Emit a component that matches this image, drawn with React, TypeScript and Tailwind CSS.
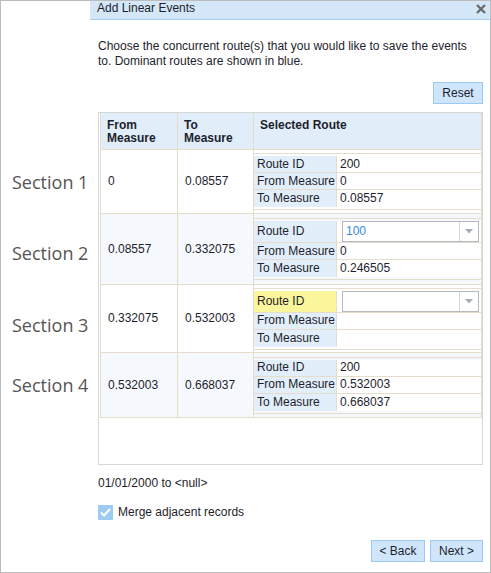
import React from "react";

type SubRow = {
  label: string;
  value: string;
  select?: boolean;
  blue?: boolean;
  yellow?: boolean;
};

type Section = {
  from: string;
  to: string;
  height: string;
  shaded: boolean;
  route: SubRow[];
};

const sections: Section[] = [
  {
    from: "0",
    to: "0.08557",
    height: "h-[64px]",
    shaded: false,
    route: [
      { label: "Route ID", value: "200" },
      { label: "From Measure", value: "0" },
      { label: "To Measure", value: "0.08557" },
    ],
  },
  {
    from: "0.08557",
    to: "0.332075",
    height: "h-[71px]",
    shaded: true,
    route: [
      { label: "Route ID", value: "100", select: true, blue: true },
      { label: "From Measure", value: "0" },
      { label: "To Measure", value: "0.246505" },
    ],
  },
  {
    from: "0.332075",
    to: "0.532003",
    height: "h-[68px]",
    shaded: false,
    route: [
      { label: "Route ID", value: "", select: true, yellow: true },
      { label: "From Measure", value: "" },
      { label: "To Measure", value: "" },
    ],
  },
  {
    from: "0.532003",
    to: "0.668037",
    height: "h-[65px]",
    shaded: true,
    route: [
      { label: "Route ID", value: "200" },
      { label: "From Measure", value: "0.532003" },
      { label: "To Measure", value: "0.668037" },
    ],
  },
];

// dropdown used for the route id when more than one route is concurrent
function RouteSelect({ value, blue }: { value: string; blue?: boolean }) {
  return (
    <div className="mx-[2px] flex h-[21px] flex-1 border border-[#b4b9c0] bg-white">
      <span
        className={`flex-1 pl-[3px] leading-[19px] ${
          blue ? "text-[#3a8ad8]" : ""
        }`}
      >
        {value}
      </span>
      <span className="flex w-[19px] items-center justify-center border-l border-[#d3d6da]">
        <svg width="8" height="5" viewBox="0 0 8 5">
          <path d="M0 0h8L4 4.5z" fill="#a3acb7" />
        </svg>
      </span>
    </div>
  );
}

function RouteDetails({ rows }: { rows: SubRow[] }) {
  return (
    <div className="border-y border-[#e6dccb] py-[2px]">
      {rows.map((r, i) => (
        <div
          key={r.label}
          className={`flex ${r.select ? "h-[22px]" : "h-[17px]"} ${
            i < rows.length - 1 ? "border-b border-[#e6dccb]" : ""
          }`}
        >
          <div
            className={`flex w-[83px] items-center border-r border-[#e6dccb] pl-[3px] ${
              r.yellow ? "bg-[#fbf69c]" : "bg-[#e2eefa]"
            }`}
          >
            {r.label}
          </div>
          <div className="flex flex-1 items-center bg-white pl-[3px]">
            {r.select ? (
              <RouteSelect value={r.value} blue={r.blue} />
            ) : (
              r.value
            )}
          </div>
        </div>
      ))}
    </div>
  );
}

export default function App() {
  return (
    <div
      className="flex h-[573px] w-[491px] border border-[#bcbcbc] bg-white text-[12px] leading-[15px] text-[#1e1e2c]"
      style={{ fontFamily: '"Liberation Sans", Arial, sans-serif' }}
    >
      {/* annotations on the left */}
      <div
        className="flex w-[89px] flex-col pt-[169px] pl-[11px] text-[18px] leading-[24px] text-[#555]"
        style={{ fontFamily: '"Open Sans", sans-serif' }}
      >
        <div>Section 1</div>
        <div className="mt-[47px]">Section 2</div>
        <div className="mt-[48px]">Section 3</div>
        <div className="mt-[36px]">Section 4</div>
      </div>

      <div className="flex w-[400px] flex-col">
        <div className="flex h-[19px] items-start justify-between border-b border-[#a9cdef] bg-[#d3e7f9] pl-[7px] pr-[4px]">
          <span className="leading-[14px]">Add Linear Events</span>
          <svg width="10" height="10" viewBox="0 0 10 10" className="mt-[3px]">
            <path
              d="M1 1L9 9M9 1L1 9"
              stroke="#6b6b6b"
              strokeWidth="2.4"
            />
          </svg>
        </div>

        <div className="flex flex-1 flex-col pl-[8px] pr-[7px]">
          <p className="mt-[19px]">
            Choose the concurrent route(s) that you would like to save the
            events to. Dominant routes are shown in blue.
          </p>

          <div className="mt-[13px] flex justify-end">
            <button className="h-[22px] w-[50px] border border-[#9ccaf1] bg-[#cfe5fb]">
              Reset
            </button>
          </div>

          <div className="mt-[8px] h-[353px] border border-[#d6d6d6]">
            <div className="ml-[1px] border-x border-[#e6dccb]">
              <div className="grid h-[37px] grid-cols-[77px_76px_1fr] border-b border-[#e6dccb] bg-[#e1eefa] font-bold leading-[13px]">
                <div className="border-r border-[#e6dccb] pl-[6px] pt-[6px]">
                  From
                  <br />
                  Measure
                </div>
                <div className="border-r border-[#e6dccb] pl-[6px] pt-[6px]">
                  To
                  <br />
                  Measure
                </div>
                <div className="pl-[6px] pt-[6px]">Selected Route</div>
              </div>

              {sections.map((s) => (
                <div
                  key={s.from}
                  className={`grid grid-cols-[77px_76px_1fr] border-b border-[#e6dccb] ${
                    s.height
                  } ${s.shaded ? "bg-[#f5f9fd]" : "bg-white"}`}
                >
                  <div className="flex items-center border-r border-[#e6dccb] pl-[7px]">
                    {s.from}
                  </div>
                  <div className="flex items-center border-r border-[#e6dccb] pl-[7px]">
                    {s.to}
                  </div>
                  <div className="flex flex-col justify-center">
                    <RouteDetails rows={s.route} />
                  </div>
                </div>
              ))}
            </div>
          </div>

          <div className="mt-[11px]">01/01/2000 to &lt;null&gt;</div>

          <label className="mt-[14px] flex items-center gap-[5px]">
            <span className="flex h-[15px] w-[15px] items-center justify-center bg-[#9ecbf1]">
              <svg width="11" height="9" viewBox="0 0 11 9">
                <path
                  d="M1 4.5L4 7.5L10 1"
                  stroke="#fff"
                  strokeWidth="2"
                  fill="none"
                />
              </svg>
            </span>
            <span>Merge adjacent records</span>
          </label>

          <div className="mt-[20px] flex justify-end gap-[5px]">
            <button className="h-[22px] w-[54px] border border-[#9ccaf1] bg-[#cfe5fb]">
              &lt; Back
            </button>
            <button className="h-[22px] w-[53px] border border-[#9ccaf1] bg-[#cfe5fb]">
              Next &gt;
            </button>
          </div>
        </div>
      </div>
    </div>
  );
}
